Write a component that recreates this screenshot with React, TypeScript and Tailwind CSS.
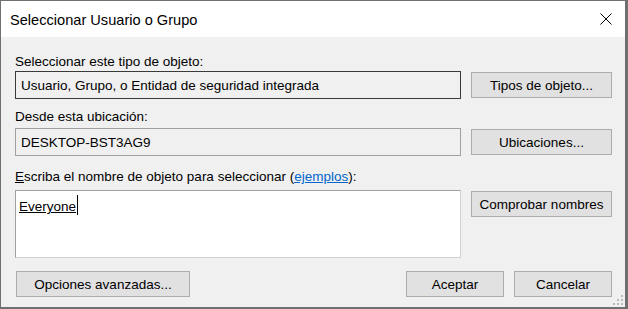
import React from 'react';

const font = { fontFamily: '"Liberation Sans", Arial, sans-serif' };

function Btn({ children, className = '' }: { children: React.ReactNode; className?: string }) {
  return (
    <button
      className={`h-[26px] bg-[#e1e1e1] border border-[#adadad] text-[13.5px] leading-[15px] text-black flex items-center justify-center ${className}`}
    >
      {children}
    </button>
  );
}

export default function App() {
  return (
    <div
      style={font}
      className="w-[628px] h-[309px] flex flex-col border-l border-t border-r-[3px] border-b-[2px] border-[#707070] bg-[#f0f0f0] text-black"
    >
      {/* Title bar */}
      <div className="h-[36px] bg-white flex items-start justify-between pl-[9px] pr-[13px]">
        <span className="mt-[10px] text-[14.6px] leading-[18px]">Seleccionar Usuario o Grupo</span>
        <svg className="mt-[12px]" width="12" height="12" viewBox="0 0 12 12">
          <path d="M0.5 0.5 L11.5 11.5 M11.5 0.5 L0.5 11.5" stroke="#000" strokeWidth="1" fill="none" />
        </svg>
      </div>

      {/* Body */}
      <div className="relative flex-1 flex flex-col pl-[14px] pr-[13px] pt-[17px] text-[13.5px] leading-[15px]">
        <span>Seleccionar este tipo de objeto:</span>
        <div className="mt-[2px] flex items-center gap-[10px]">
          <div className="flex-1 h-[28px] border border-[#3a3a3a] flex items-center pl-[5px]">
            Usuario, Grupo, o Entidad de seguridad integrada
          </div>
          <Btn className="w-[141px]">Tipos de objeto...</Btn>
        </div>

        <span className="mt-[10px]">Desde esta ubicación:</span>
        <div className="mt-[4px] flex items-center gap-[10px]">
          <div className="flex-1 h-[28px] border border-[#a0a0a0] flex items-center pl-[5px]">DESKTOP-BST3AG9</div>
          <Btn className="w-[141px]">Ubicaciones...</Btn>
        </div>

        <span className="mt-[13px]">
          <span className="underline">E</span>scriba el nombre de objeto para seleccionar (
          <a href="#" className="text-[#0066cc] underline">ejemplos</a>):
        </span>
        <div className="mt-[6px] flex items-start gap-[10px]">
          <div className="flex-1 h-[68px] bg-white border border-t-[#a0a0a0] border-l-[#a0a0a0] border-r-[#d0d0d0] border-b-[#d0d0d0] pl-[3px] pt-[8px]">
            <span className="relative underline">
              Everyone
              <span className="absolute right-[-2px] top-[-4px] w-px h-[20px] bg-black" />
            </span>
          </div>
          <Btn className="w-[141px] mt-[1px]">Comprobar nombres</Btn>
        </div>

        <div className="mt-[13px] flex items-center gap-[10px]">
          <Btn className="w-[174px] ml-[1px]">Opciones avanzadas...</Btn>
          <div className="flex-1" />
          <Btn className="w-[98px]">Aceptar</Btn>
          <Btn className="w-[98px]">Cancelar</Btn>
        </div>

        {/* size grip */}
        <svg className="absolute right-[2px] bottom-[2px]" width="10" height="10" viewBox="0 0 10 10">
          <g fill="#bcbcbc">
            <rect x="8" y="0" width="2" height="2" />
            <rect x="4" y="4" width="2" height="2" />
            <rect x="8" y="4" width="2" height="2" />
            <rect x="0" y="8" width="2" height="2" />
            <rect x="4" y="8" width="2" height="2" />
            <rect x="8" y="8" width="2" height="2" />
          </g>
        </svg>
      </div>
    </div>
  );
}
